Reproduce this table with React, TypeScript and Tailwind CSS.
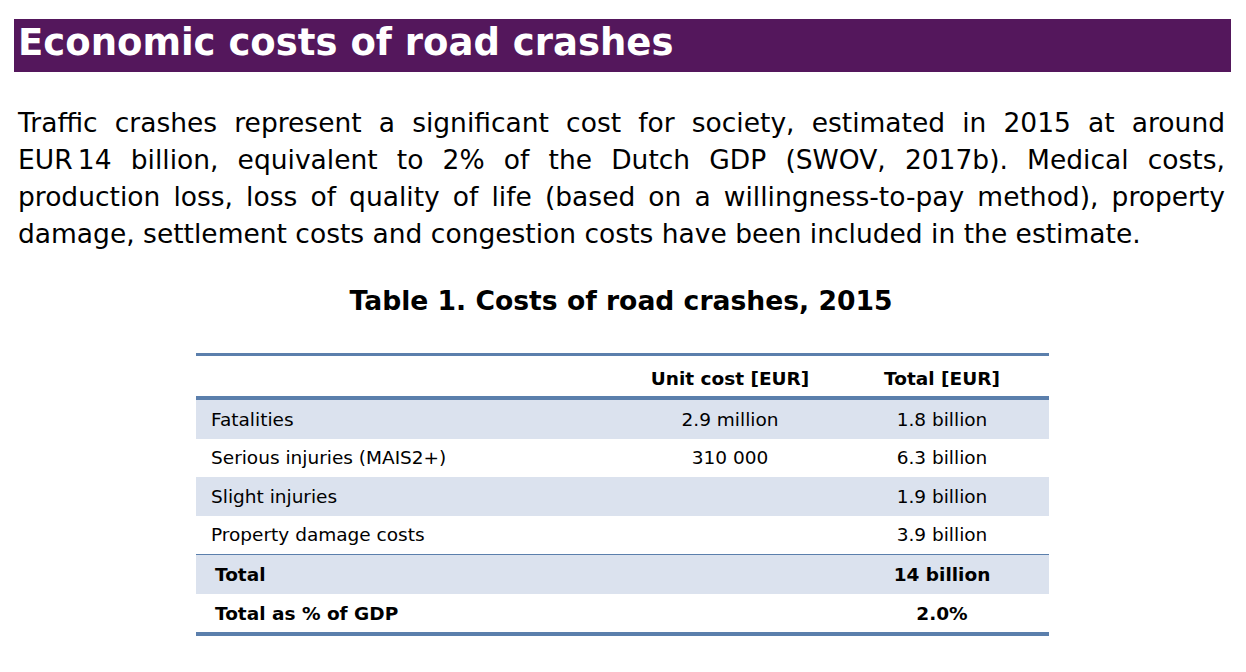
import React from "react";

const rows = [
  { label: "Fatalities", unit: "2.9 million", total: "1.8 billion", shade: true },
  { label: "Serious injuries (MAIS2+)", unit: "310 000", total: "6.3 billion", shade: false },
  { label: "Slight injuries", unit: "", total: "1.9 billion", shade: true },
  { label: "Property damage costs", unit: "", total: "3.9 billion", shade: false },
];

const lines = [
  "Traffic crashes represent a significant cost for society, estimated in 2015 at around",
  "EUR\u202F14 billion, equivalent to 2% of the Dutch GDP (SWOV, 2017b). Medical costs,",
  "production loss, loss of quality of life (based on a willingness-to-pay method), property",
];

export default function App() {
  return (
    <div
      className="w-[1246px] h-[672px] bg-white text-black overflow-hidden"
      style={{ fontFamily: '"DejaVu Sans", Verdana, sans-serif' }}
    >
      <div className="pt-[19px] pl-[14px]">
        <div className="w-[1217px] h-[53px] bg-[#54175c] pl-[4px]">
          <h1 className="text-[37px] leading-[47px] font-bold text-white">
            Economic costs of road crashes
          </h1>
        </div>
      </div>

      <div className="ml-[18px] mt-[32px] w-[1207px] text-[26.5px] leading-[37px]">
        {lines.map((l) => (
          <p key={l} className="text-justify [text-align-last:justify]">
            {l}
          </p>
        ))}
        <p>damage, settlement costs and congestion costs have been included in the estimate.</p>
      </div>

      <h2 className="mt-[33px] text-center text-[26.6px] leading-[32px] font-bold pr-[4px]">
        Table 1. Costs of road crashes, 2015
      </h2>

      <div className="ml-[196px] mt-[36px] w-[853px] text-[18.5px] leading-[21px]">
        <div className="border-t-[3px] border-b-[4px] border-[#5b7fac] h-[47px] grid grid-cols-[429px_210px_214px] font-bold pt-[12px]">
          <div />
          <div className="text-center">Unit cost [EUR]</div>
          <div className="text-center">Total [EUR]</div>
        </div>
        {rows.map((r) => (
          <div
            key={r.label}
            className={`h-[38.5px] grid grid-cols-[429px_210px_214px] items-center ${r.shade ? "bg-[#dbe2ee]" : "bg-white"}`}
          >
            <div className="pl-[15px]">{r.label}</div>
            <div className="text-center">{r.unit}</div>
            <div className="text-center">{r.total}</div>
          </div>
        ))}
        <div className="border-t-[1.5px] border-[#5b7fac]" />
        <div className="h-[39px] grid grid-cols-[429px_210px_214px] items-center bg-[#dbe2ee] font-bold">
          <div className="pl-[19px]">Total</div>
          <div />
          <div className="text-center">14 billion</div>
        </div>
        <div className="h-[38px] grid grid-cols-[429px_210px_214px] items-center font-bold border-b-[4px] border-[#5b7fac] box-content">
          <div className="pl-[19px]">Total as % of GDP</div>
          <div />
          <div className="text-center">2.0%</div>
        </div>
      </div>
    </div>
  );
}
